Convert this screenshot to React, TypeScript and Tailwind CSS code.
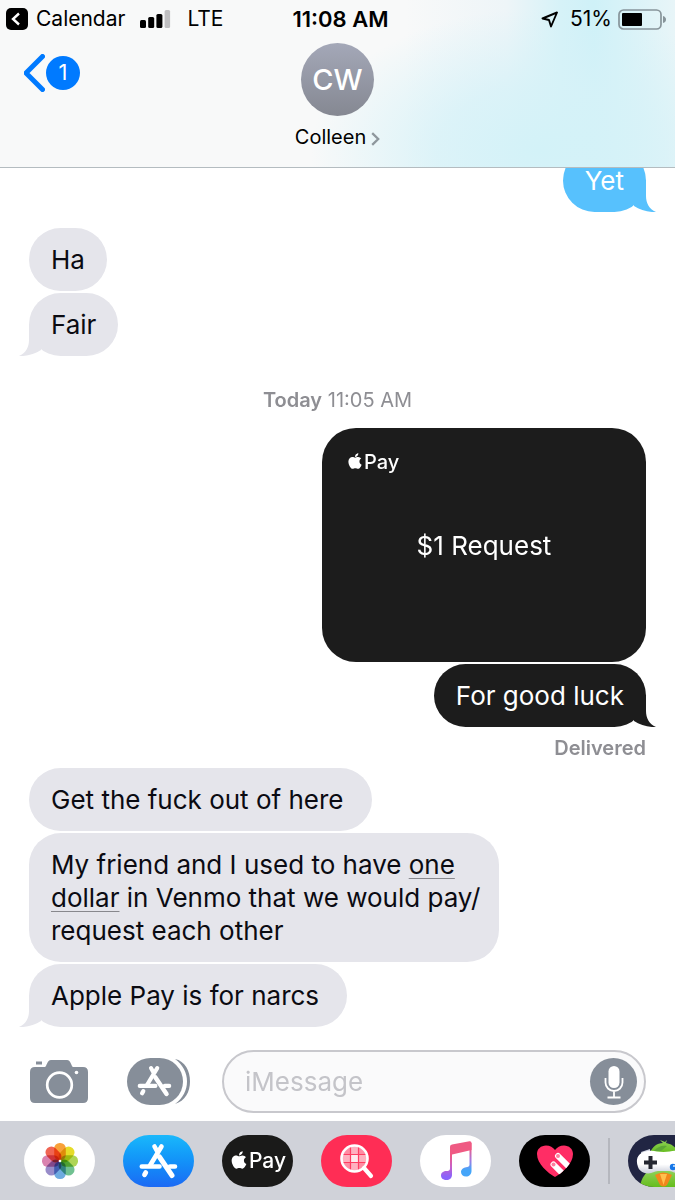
import React from "react";
import { FaApple } from "react-icons/fa";

type BubbleProps = {
  children: React.ReactNode;
  tone: "gray" | "blue" | "black";
  tail?: boolean;
  inset?: "normal" | "roomy" | "snug";
};

const tones = {
  gray: { box: "self-start bg-[#e5e5eb] text-[#0b0b12]", tail: "left-[-10px] -scale-x-100 text-[#e5e5eb]" },
  blue: { box: "self-end bg-[#57c1fd] text-white", tail: "right-[-10px] text-[#57c1fd]" },
  black: { box: "self-end bg-[#1c1c1c] text-white", tail: "right-[-10px] text-[#1c1c1c]" },
};

const insets = { normal: "pr-[22px]", roomy: "pr-[28px]", snug: "pr-[19px]" };

function Bubble({ children, tone, tail, inset = "normal" }: BubbleProps) {
  return (
    <li
      className={`relative max-w-4/5 rounded-[32px] py-[15px] pl-[22px] text-[26px] leading-[33px] ${insets[inset]} ${tones[tone].box}`}
    >
      {children}
      {tail && (
        <svg
          className={`absolute bottom-0 h-[32px] w-[27px] ${tones[tone].tail}`}
          viewBox="0 0 27 32"
          fill="currentColor"
          aria-hidden="true"
        >
          <path d="M5 26C11 30 19 32.500 27 32C20 29 17 23 17 16V0H5Z" />
        </svg>
      )}
    </li>
  );
}

function StoreGlyph({ className }: { className: string }) {
  return (
    <svg className={className} viewBox="0 0 40 36" fill="none" stroke="currentColor" strokeWidth="4.600" strokeLinecap="round" aria-hidden="true">
      <path d="M22.500 3.500 11 22.500" />
      <path d="M6.800 29.500 5.500 31.800" strokeWidth="4.800" />
      <path d="M15.500 3.500 18 8" />
      <path d="M20.500 14 33 32.500" strokeWidth="5" />
      <path d="M2.800 23.500H20.500M31 23.500H36" />
    </svg>
  );
}

function ApplePay({ className, size }: { className: string; size: number }) {
  return (
    <span className={`flex items-center text-white ${className}`}>
      <FaApple size={size} aria-hidden="true" className="-mt-[2px]" />
      Pay
    </span>
  );
}

const petals = [
  { color: "#f7941d", angle: 0 },
  { color: "#e3d80b", angle: 45 },
  { color: "#a4cf3e", angle: 90 },
  { color: "#5db982", angle: 135 },
  { color: "#5aa0dc", angle: 180 },
  { color: "#8a7cc2", angle: 225 },
  { color: "#d572a4", angle: 270 },
  { color: "#ee4f3b", angle: 315 },
];

function PhotosGlyph() {
  return (
    <svg className="h-[38px] w-[38px]" viewBox="-19 -19 38 38" aria-hidden="true">
      {petals.map((p) => (
        <rect
          key={p.angle}
          x="-5.800"
          y="-18"
          width="11.600"
          height="17.500"
          rx="5.500"
          fill={p.color}
          opacity="0.880"
          transform={`rotate(${p.angle})`}
          className="mix-blend-multiply"
        />
      ))}
      <circle r="1.300" fill="#fff" />
    </svg>
  );
}

function ImageSearchGlyph() {
  return (
    <svg className="h-[36px] w-[36px]" viewBox="0 0 36 36" fill="none" aria-hidden="true">
      <circle cx="15.500" cy="15.500" r="12" fill="#ff8ca3" />
      <path d="M12 3h7v8h-7zM12 20h7v8h-7zM3 12h8v7H3zM20 12h8v7h-8z" fill="#ffb0bf" />
      <path d="M12 12h7v7h-7z" fill="#ffe9ed" />
      <path d="M11.500 4v23M19.500 4v23M4 11.500h23M4 19.500h23" stroke="#ff3d62" strokeWidth="1.200" />
      <circle cx="15.500" cy="15.500" r="13" stroke="#fff" strokeWidth="2.600" />
      <path d="m25 25 7 8" stroke="#fff" strokeWidth="4.200" strokeLinecap="round" />
    </svg>
  );
}

function MusicGlyph() {
  return (
    <svg className="h-[40px] w-[32px]" viewBox="0 0 32 40" aria-hidden="true">
      <defs>
        <linearGradient id="stemLeft" x1="0" y1="0" x2="0" y2="1">
          <stop offset="0.250" stopColor="#ef5a83" />
          <stop offset="0.600" stopColor="#c760c8" />
          <stop offset="0.900" stopColor="#8a63fb" />
        </linearGradient>
        <linearGradient id="stemRight" x1="0" y1="0" x2="0" y2="1">
          <stop offset="0.150" stopColor="#ef5a83" />
          <stop offset="0.500" stopColor="#a778df" />
          <stop offset="0.800" stopColor="#45a5f9" />
        </linearGradient>
      </defs>
      <path d="M10 6h2v28c0 3-2.500 5-5.500 5S1 37.500 1 34.500 3.500 30 6.500 30c2 0 3.500-.5 3.500-2.500Z" fill="url(#stemLeft)" />
      <path d="M29.500 2h2v28c0 3.500-2.500 5.500-5.500 5.500s-5-1.800-5-4.500 2.500-4.500 5-4.800c2.300-.2 3.500-.7 3.500-2.700Z" fill="url(#stemRight)" />
      <path d="M10 5.500Q10 4 12 3.600L29.500.2Q31.500 0 31.500 2v7L10 14Z" fill="#ef5a83" />
    </svg>
  );
}

function TouchGlyph() {
  const heart = "M19 33C12 29 1 20 1 10 1 5 5 1.500 10 1.500c4 0 7 2 9 4.500 2-2.500 5-4.500 9-4.500 5 0 9 3.500 9 8.500 0 10-11 19-18 23Z";
  return (
    <svg className="h-[34px] w-[38px]" viewBox="0 0 38 34" aria-hidden="true">
      <clipPath id="heart">
        <path d={heart} />
      </clipPath>
      <path d={heart} fill="#ff2d65" />
      <g clipPath="url(#heart)">
        <path d="m22 12 14 14M17.500 20.500l13 13" stroke="#fff" strokeWidth="6" strokeLinecap="round" />
      </g>
      <circle cx="22" cy="12" r="2" fill="#ff7e9f" />
      <circle cx="17.500" cy="20.500" r="2" fill="#ff7e9f" />
    </svg>
  );
}

function PigeonGlyph() {
  return (
    <svg className="h-[52px] w-[71px]" viewBox="0 0 71 52" aria-hidden="true">
      <defs>
        <linearGradient id="feathers" x1="0" y1="0" x2="0" y2="1">
          <stop offset="0" stopColor="#8ed058" />
          <stop offset="1" stopColor="#65bd1d" />
        </linearGradient>
        <linearGradient id="pad" x1="0" y1="0" x2="0" y2="1">
          <stop offset="0.600" stopColor="#ffffff" />
          <stop offset="1" stopColor="#c9cdda" />
        </linearGradient>
      </defs>
      <path d="M12 52c1-7 3-11 8-16h31c5 5 7 9 8 16Z" fill="url(#feathers)" />
      <path d="M22 18c2-6 7-10 13-10l-3-3 5 2 2-2-1 3c6 1 10 4 12 10Z" fill="url(#feathers)" />
      <path d="M26 16c3-4 8-6 13-5l-6 5Z" fill="#5da836" />
      <path d="m13 17 9-3v5l-8 3ZM58 17l-9-3v5l8 3Z" fill="#cfd3df" />
      <path d="M20 16c6-1 9 1 15.500 1S45 15 51 16c10 1 13 8 10 16-2 6-10 8-16 5-3-1.500-5-1-9.500-1s-6-.5-9.500 1c-6 3-14 1-16-5-3-8 0-15 10-16Z" fill="url(#pad)" />
      <path d="M22.500 21v13M16 27.500h13" stroke="#252731" strokeWidth="4" />
      <circle cx="45" cy="32" r="3.200" fill="#1677e8" />
      <circle cx="46" cy="31" r="1" fill="#d3eaff" />
      <circle cx="52" cy="26" r="3" fill="#e34a4a" />
      <path d="M27 40q8-5 17 0l-5 10q-3.500 3-7 0Z" fill="#f2871b" />
      <path d="m32 39 3.500 11L39 39Z" fill="#ffc04d" />
    </svg>
  );
}

const apps = [
  { name: "Photos", className: "bg-white", glyph: <PhotosGlyph /> },
  { name: "App Store", className: "bg-linear-to-b from-[#1bb8fb] to-[#1c69f4]", glyph: <StoreGlyph className="h-[36px] w-[40px] text-white" /> },
  { name: "Apple Pay", className: "bg-[#1a1a19]", glyph: <ApplePay size={20} className="text-[21px] font-medium leading-7" /> },
  { name: "Image search", className: "bg-[#ff2d55]", glyph: <ImageSearchGlyph /> },
  { name: "Music", className: "bg-white", glyph: <MusicGlyph /> },
  { name: "Digital Touch", className: "bg-black", glyph: <TouchGlyph /> },
];

export default function App() {
  return (
    <div className="flex min-h-screen flex-col overflow-x-hidden bg-white font-['Inter','Liberation_Sans',sans-serif] text-black">
      <header className="relative z-10 h-[168px] border-b border-[#b4bcc0] bg-[#f8f9f9] bg-[radial-gradient(ellipse_34%_85%_at_80%_90%,#d3f2f8_0%,#d6f2f8cc_45%,#d9f2f800_100%),linear-gradient(to_right,#f8f9f900_60%,#eef5f8_75%,#d6f2f8_83%,#cff1f8_88%,#dbf3f8_94%,#e8f5f8_100%)]">
        <div className="grid h-[38px] grid-cols-[1fr_auto_1fr] items-center pl-[6px] text-[21px] leading-6">
          <div className="flex items-center">
            <button type="button" className="flex items-center gap-2">
              <svg className="h-[22px] w-[22px]" viewBox="0 0 22 22" aria-hidden="true">
                <rect width="22" height="22" rx="5" fill="#000" />
                <path d="m13 5.500-6 5.500 6 5.500" fill="none" stroke="#fff" strokeWidth="2.400" />
              </svg>
              Calendar
            </button>
            <svg className="ml-[15px] h-[18px] w-[31px]" viewBox="0 0 31 18" role="img" aria-label="Signal: 3 of 4 bars">
              <rect x="0" y="10" width="6" height="8" rx="1.500" />
              <rect x="8.200" y="7" width="6" height="11" rx="1.500" />
              <rect x="16.400" y="4" width="6" height="14" rx="1.500" />
              <rect x="24.600" y="0" width="5.500" height="18" rx="1.500" fill="#bfbfc1" />
            </svg>
            <span className="ml-4">LTE</span>
          </div>
          <time className="text-[22px] font-semibold">11:08 AM</time>
          <div className="flex items-center justify-end pr-[9px]">
            <svg className="mr-3 h-[17px] w-[17px]" viewBox="0 0 17 17" fill="none" stroke="#000" strokeWidth="1.900" strokeLinejoin="round" aria-hidden="true">
              <path d="M16 1.500 1.500 7.500 8 9 10 15.500Z" />
            </svg>
            51%
            <svg className="ml-[6px] h-[21px] w-[48px]" viewBox="0 0 48 21" aria-hidden="true">
              <rect x="1" y="1" width="42" height="19" rx="4.500" fill="none" stroke="#87949a" strokeWidth="1.700" />
              <rect x="4" y="4" width="20" height="13" rx="1" />
              <path d="M45 7q3 1 3 3.500T45 14Z" fill="#87949a" />
            </svg>
          </div>
        </div>
        <div className="grid grid-cols-[1fr_auto_1fr] px-6">
          <button type="button" aria-label="Back, 1 unread" className="mt-[15px] flex h-[39px] items-center gap-[1px] justify-self-start">
            <svg className="h-[38px] w-[21px]" viewBox="0 0 21 38" fill="none" aria-hidden="true">
              <path d="M18.500 2.500 2 19l16.500 16.500" stroke="#007aff" strokeWidth="5" strokeLinecap="round" strokeLinejoin="miter" />
            </svg>
            <span className="flex h-[34px] w-[34px] items-center justify-center rounded-full bg-[#007aff] text-[22px] text-white">1</span>
          </button>
          <button type="button" className="mt-[5px] flex flex-col items-center">
            <span className="flex h-[73px] w-[73px] items-center justify-center rounded-full bg-linear-to-b from-[#a4a8b8] to-[#858892] text-[29px] font-medium text-white">
              CW
            </span>
            <span className="mt-2 flex items-center gap-[5px] text-[20px] leading-[26px]">
              Colleen
              <svg className="mt-[3px] h-[14px] w-[9px]" viewBox="0 0 9 14" fill="none" aria-hidden="true">
                <path d="m1.200 1.200 6 5.800-6 5.800" stroke="#8e979d" strokeWidth="2.300" />
              </svg>
            </span>
          </button>
          <span />
        </div>
      </header>

      <main className="flex-1 pr-[29px] pl-[29px]">
        <ul className="-mt-[19px] flex flex-col">
          <Bubble tone="blue" tail>Yet</Bubble>
        </ul>
        <ul className="mt-4 flex flex-col gap-[2px]">
          <Bubble tone="gray">Ha</Bubble>
          <Bubble tone="gray" tail>Fair</Bubble>
        </ul>
        <p className="mt-[31px] text-center text-[20px] leading-[26px] text-[#8e8e93]">
          <span className="font-semibold">Today</span> 11:05 AM
        </p>
        <ul className="mt-[15px] flex flex-col gap-[2px]">
          <li className="flex h-[234px] w-[324px] flex-col self-end rounded-[34px] bg-[#1c1c1c] px-6 pt-5 text-white">
            <ApplePay size={18} className="text-[20px] font-medium leading-7" />
            <p className="mt-[53px] text-center text-[26px] leading-[33px]">$1 Request</p>
          </li>
          <Bubble tone="black" tail>For good luck</Bubble>
        </ul>
        <p className="mt-2 text-right text-[20px] font-semibold leading-[26px] text-[#8e8e93]">Delivered</p>
        <ul className="mt-[7px] flex flex-col gap-[2px]">
          <Bubble tone="gray" inset="roomy">Get the fuck out of here</Bubble>
          <Bubble tone="gray" inset="snug">
            My friend and I used to have <a href="#pay" className="underline decoration-[#88888d] decoration-1 underline-offset-4">one<br />dollar</a> in Venmo that we would pay/<br />request each other
          </Bubble>
          <Bubble tone="gray" tail inset="roomy">Apple Pay is for narcs</Bubble>
        </ul>
      </main>

      <form className="flex items-center pr-[29px] pb-2 pl-[30px]" onSubmit={(e) => e.preventDefault()}>
        <button type="button" aria-label="Camera">
          <svg className="h-[46px] w-[58px]" viewBox="0 0 58 46" fill="#868e99" aria-hidden="true">
            <path d="M6 2.500h6v3H6zM5 8h10c2-1 2-7 6-7h16c4 0 4 6 6 7h10q5 0 5 5v26q0 5-5 5H5q-5 0-5-5V13q0-5 5-5Z" />
            <circle cx="29.500" cy="26" r="12.300" fill="none" stroke="#fff" strokeWidth="2.700" />
            <circle cx="46.500" cy="13.500" r="1.800" fill="#fff" />
          </svg>
        </button>
        <button type="button" aria-label="Apps" className="relative ml-[39px] h-[47px] w-[64px]">
          <svg className="h-[47px] w-[64px]" viewBox="0 0 64 47" fill="#868e99" aria-hidden="true">
            <rect width="56" height="47" rx="23.500" />
            <path d="M48 1C58 3 63 13 63 23.500S58 43 48 46C56 40 60 32 60 23.500S56 7 48 1Z" />
          </svg>
          <StoreGlyph className="absolute top-[7px] left-[10px] h-[32px] w-[36px] text-white" />
        </button>
        <div className="ml-[31px] flex h-[63px] min-w-0 flex-1 items-center rounded-full border-2 border-[#c8c8cd] bg-[#fafafb] pr-[7px] pl-[21px]">
          <input
            type="text"
            aria-label="iMessage"
            placeholder="iMessage"
            className="min-w-0 flex-1 bg-transparent text-[26px] leading-[33px] outline-none placeholder:text-[#c4c4c9]"
          />
          <button type="button" aria-label="Record audio" className="flex h-[47px] w-[47px] items-center justify-center rounded-full bg-[#868e99]">
            <svg className="h-[34px] w-[20px]" viewBox="0 0 20 34" fill="none" stroke="#fff" strokeWidth="1.800" aria-hidden="true">
              <rect x="4.500" y="1" width="11" height="22" rx="5.500" fill="#fff" stroke="none" />
              <path d="M1.500 13v4.500a8.500 8.500 0 0 0 17 0V13M10 26v6M3.500 32.500h13" />
            </svg>
          </button>
        </div>
      </form>

      <nav aria-label="iMessage apps" className="flex h-[79px] items-center overflow-hidden bg-[#d0d2d9] pl-6">
        <div className="flex shrink-0 gap-7">
          {apps.map((app) => (
            <button
              key={app.name}
              type="button"
              aria-label={app.name}
              className={`flex h-[52px] w-[71px] items-center justify-center rounded-full ${app.className}`}
            >
              {app.glyph}
            </button>
          ))}
        </div>
        <span className="ml-[18px] h-[46px] w-[2px] shrink-0 bg-[#b5b7be]" />
        <button type="button" aria-label="GamePigeon" className="ml-[18px] h-[52px] w-[71px] shrink-0 overflow-hidden rounded-full bg-[#212543]">
          <PigeonGlyph />
        </button>
      </nav>
    </div>
  );
}
